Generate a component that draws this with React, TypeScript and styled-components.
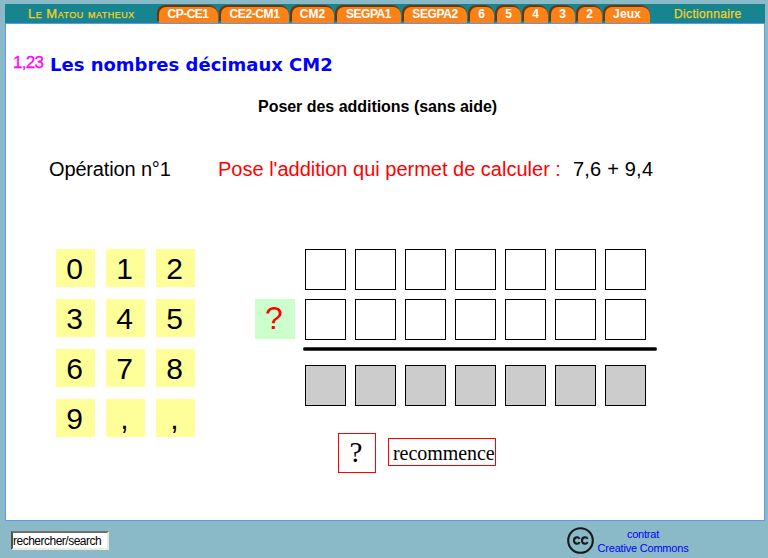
import React from "react";
import styled, { createGlobalStyle } from "styled-components";

const sans = `"Liberation Sans", Arial, sans-serif`;
const serif = `"Liberation Serif", "Times New Roman", serif`;

const GlobalStyle = createGlobalStyle`
  *, *::before, *::after { box-sizing: border-box; }
  body { margin: 0; background: #8abac8; overflow: hidden; }
`;

const Page = styled.div`
  width: 768px;
  height: 558px;
  padding: 4px 3px 0 5px;
  background: #8abac8;
  font-family: ${sans};
  color: #000;
`;

const NavBar = styled.nav`
  display: flex;
  align-items: stretch;
  height: 19px;
  background: #178590;
  font-size: 12px;
  line-height: 19px;
  white-space: nowrap;
`;

const Brand = styled.div`
  width: 152px;
  padding-left: 23px;
  color: #f8d020;
  font-variant: small-caps;
  font-size: 13px;
  line-height: 20px;
  letter-spacing: 0.5px;
  -webkit-text-stroke: 0.25px #f8d020;
`;

const Tab = styled.div<{ $width: number }>`
  width: ${(p) => p.$width - 1}px;
  height: 18px;
  margin: 1px 1px 0 0;
  padding: 2px 0 0 2px;
  background: linear-gradient(#6f3509, #6f3509) 0 0 / 100% 16px no-repeat;
  border-radius: 8px 9px 0 0;
`;

const TabFace = styled.div<{ $spacing: number }>`
  height: 16px;
  padding-right: 1px;
  background: #fb8216;
  border-radius: 7px 8px 0 0;
  color: #fff;
  font-weight: bold;
  line-height: 14px;
  text-align: center;
  letter-spacing: ${(p) => p.$spacing}px;
`;

const DictionaryLink = styled.div`
  margin-left: 23px;
  color: #f8d020;
  line-height: 20px;
  letter-spacing: 0.35px;
  -webkit-text-stroke: 0.25px #f8d020;
`;

const Panel = styled.main`
  width: 760px;
  height: 498px;
  border: 1px solid #6495ed;
  background: #fff;
  white-space: nowrap;
`;

const Heading = styled.header`
  display: flex;
  height: 48px;
  padding: 29px 0 0 7px;
`;

const DecimalMark = styled.span`
  width: 37px;
  color: #f0f;
  font-size: 17px;
  line-height: 19px;
  letter-spacing: -0.7px;
  -webkit-text-stroke: 0.3px #f0f;
`;

const Title = styled.h1`
  margin: 0;
  color: #00f;
  font: bold 18px/24px "DejaVu Sans", Verdana, sans-serif;
`;

const Subtitle = styled.h2`
  height: 62px;
  margin: 0;
  padding: 25px 0 0 252px;
  font-size: 16px;
  line-height: 20px;
  letter-spacing: -0.03px;
`;

const Instruction = styled.div`
  display: flex;
  height: 115px;
  padding: 23px 0 0 43px;
  font-size: 20px;
  line-height: 24px;
`;

const OperationName = styled.span`
  width: 169px;
  letter-spacing: -0.15px;
`;

const Prompt = styled.span`
  width: 355px;
  color: #f00;
`;

const Expression = styled.span`
  letter-spacing: 0.2px;
`;

const Workspace = styled.section`
  display: flex;
  height: 184px;
  padding-left: 50px;
`;

const Keypad = styled.div`
  display: grid;
  grid-template-columns: repeat(3, 39px);
  grid-auto-rows: 38px;
  gap: 12px 11px;
  width: 199px;
  align-content: start;
`;

const Key = styled.div`
  padding-right: 2px;
  background: #ff9;
  font-size: 30px;
  line-height: 39px;
  text-align: center;
`;

const HelpKey = styled.div`
  width: 40px;
  height: 40px;
  margin: 50px 10px 0 0;
  padding-right: 2px;
  background: #cfc;
  color: #f00;
  font-size: 32px;
  line-height: 39px;
  text-align: center;
`;

const Operation = styled.div`
  width: 353px;
`;

const DigitRow = styled.div`
  display: flex;
  gap: 9px;
  margin-bottom: 9px;
`;

const DigitCell = styled.div<{ $result?: boolean }>`
  width: 41px;
  height: 41px;
  border: 1px solid #000;
  background: ${(p) => (p.$result ? "#ccc" : "#fff")};
`;

const SumLine = styled.div`
  width: 354px;
  height: 4px;
  margin: -2px 0 14px -2px;
  border: solid #444;
  border-width: 1px 0;
  border-radius: 2px;
  background: #000;
`;

const Actions = styled.div`
  display: flex;
  align-items: flex-start;
  gap: 12px;
  padding-left: 332px;
  font-family: ${serif};
`;

const HintButton = styled.div`
  width: 38px;
  height: 40px;
  padding-right: 2px;
  border: 1px solid #f00;
  font-size: 29px;
  line-height: 36px;
  text-align: center;
`;

const RestartButton = styled.div`
  width: 108px;
  height: 28px;
  margin-top: 5px;
  padding-left: 4px;
  border: 1px solid #f00;
  font-size: 20px;
  line-height: 29px;
  letter-spacing: -0.05px;
`;

const Footer = styled.footer`
  display: flex;
  padding: 6px 0 0 6px;
`;

const SearchInput = styled.input`
  width: 98px;
  height: 19px;
  margin: 4px 458px 0 0;
  padding: 0;
  border: 2px solid;
  border-color: #707070 #eee9df #eee9df #505050;
  background: #fff;
  color: #000;
  font: 12px ${sans};
  letter-spacing: -0.5px;
`;

const License = styled.div`
  width: 92px;
  margin-left: 3px;
  color: #00f;
  font-size: 11px;
  line-height: 14px;
  letter-spacing: -0.2px;
  text-align: center;
  white-space: nowrap;
`;

const tabs: [string, number, number][] = [
  ["CP-CE1", 62, -0.5],
  ["CE2-CM1", 71, -0.4],
  ["CM2", 45, 0],
  ["SEGPA1", 67, -0.5],
  ["SEGPA2", 66, -0.4],
  ["6", 27, 0],
  ["5", 27, 0],
  ["4", 27, 0],
  ["3", 27, 0],
  ["2", 27, 0],
  ["Jeux", 48, 0.1],
];
const keys = ["0", "1", "2", "3", "4", "5", "6", "7", "8", "9", ",", ","];
const columns = [0, 1, 2, 3, 4, 5, 6];

function CreativeCommonsIcon() {
  return (
    <svg width="27" height="27" viewBox="0 0 27 27" fill="none" stroke="#171a1c">
      <circle cx="13.5" cy="13.5" r="12.3" strokeWidth="2.1" />
      <path d="M12.6 11.9C11.4 9.5 7 9.7 7 13.5s4.4 4 5.6 1.6M20.6 11.9c-1.2-2.4-5.6-2.2-5.6 1.6s4.4 4 5.6 1.6" strokeWidth="2.1" />
    </svg>
  );
}

function Digits({ result }: { result?: boolean }) {
  return (
    <DigitRow>
      {columns.map((c) => (
        <DigitCell key={c} $result={result} />
      ))}
    </DigitRow>
  );
}

export default function App() {
  return (
    <Page>
      <GlobalStyle />
      <NavBar>
        <Brand>Le Matou matheux</Brand>
        {tabs.map(([label, width, spacing]) => (
          <Tab key={label} $width={width}>
            <TabFace $spacing={spacing}>{label}</TabFace>
          </Tab>
        ))}
        <DictionaryLink>Dictionnaire</DictionaryLink>
      </NavBar>
      <Panel>
        <Heading>
          <DecimalMark>1,23</DecimalMark>
          <Title>Les nombres décimaux CM2</Title>
        </Heading>
        <Subtitle>Poser des additions (sans aide)</Subtitle>
        <Instruction>
          <OperationName>Opération n°1</OperationName>
          <Prompt>Pose l'addition qui permet de calculer :</Prompt>
          <Expression>7,6 + 9,4</Expression>
        </Instruction>
        <Workspace>
          <Keypad>
            {keys.map((k, i) => (
              <Key key={i}>{k}</Key>
            ))}
          </Keypad>
          <HelpKey>?</HelpKey>
          <Operation>
            <Digits />
            <Digits />
            <SumLine />
            <Digits result />
          </Operation>
        </Workspace>
        <Actions>
          <HintButton>?</HintButton>
          <RestartButton>recommence</RestartButton>
        </Actions>
      </Panel>
      <Footer>
        <SearchInput defaultValue="rechercher/search" />
        <CreativeCommonsIcon />
        <License>
          contrat
          <br />
          Creative Commons
        </License>
      </Footer>
    </Page>
  );
}
